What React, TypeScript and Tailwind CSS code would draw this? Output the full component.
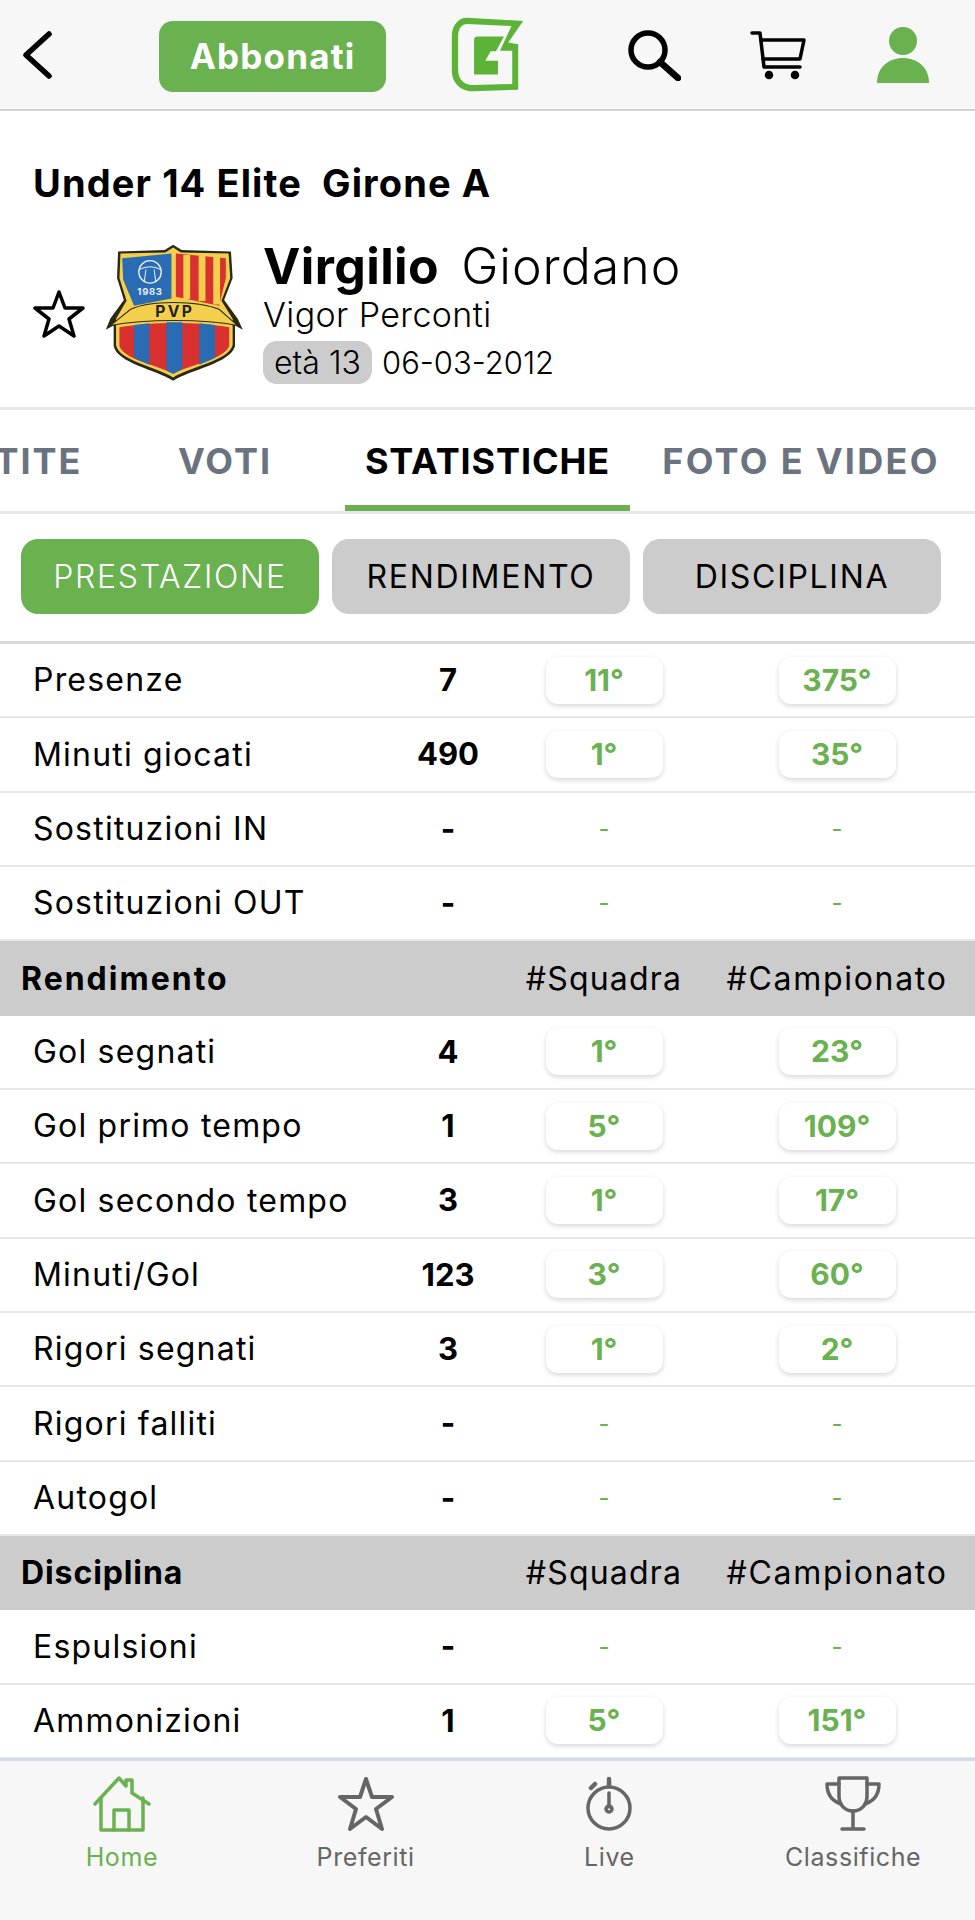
const GREEN = '#6ab150';

const rows1 = [
  { label: 'Presenze', value: '7', a: '11°', b: '375°' },
  { label: 'Minuti giocati', value: '490', a: '1°', b: '35°' },
  { label: 'Sostituzioni IN', value: '-', a: '-', b: '-' },
  { label: 'Sostituzioni OUT', value: '-', a: '-', b: '-' },
];
const rows2 = [
  { label: 'Gol segnati', value: '4', a: '1°', b: '23°' },
  { label: 'Gol primo tempo', value: '1', a: '5°', b: '109°' },
  { label: 'Gol secondo tempo', value: '3', a: '1°', b: '17°' },
  { label: 'Minuti/Gol', value: '123', a: '3°', b: '60°' },
  { label: 'Rigori segnati', value: '3', a: '1°', b: '2°' },
  { label: 'Rigori falliti', value: '-', a: '-', b: '-' },
  { label: 'Autogol', value: '-', a: '-', b: '-' },
];
const rows3 = [
  { label: 'Espulsioni', value: '-', a: '-', b: '-' },
  { label: 'Ammonizioni', value: '1', a: '5°', b: '151°' },
];

const Rank = ({ text }: { text: string }) =>
  text === '-' ? (
    <span className="text-[24px] text-[#6ab150]">-</span>
  ) : (
    <span className="w-[117px] h-[47px] rounded-[12px] bg-white shadow-[0_2px_5px_rgba(0,0,0,0.16)] flex items-center justify-center text-[30px] font-bold text-[#6ab150]">
      {text}
    </span>
  );

const Row = ({ label, value, a, b }: { label: string; value: string; a: string; b: string }) => (
  <div className="grid grid-cols-[398px_100px_212px_254px] items-center h-[74.35px] border-b-2 border-[#e5e7eb]">
    <span className="pl-[33px] text-[32px] tracking-[1.2px] font-normal text-black">{label}</span>
    <span className="text-center text-[31px] font-bold text-black">{value}</span>
    <span className="flex justify-center">
      <Rank text={a} />
    </span>
    <span className="flex justify-center">
      <Rank text={b} />
    </span>
  </div>
);

const SectionHead = ({ title, cls }: { title: string; cls: string }) => (
  <div className="grid grid-cols-[498px_212px_254px] items-center h-[74.35px] bg-[#cccccc] text-[32px] tracking-[1.2px] font-normal text-black">
    <span className={`pl-[21px] font-bold ${cls}`}>{title}</span>
    <span className="text-center">#Squadra</span>
    <span className="text-center tracking-[1.7px]">#Campionato</span>
  </div>
);

const Crest = () => (
  <svg width="138" height="137" viewBox="50 30 405 403" className="ml-[20px] shrink-0">
    <path d="M250 32 L275 48 L420 52 L425 130 L400 195 L440 250 L455 282 L432 270 L432 330 C420 380 300 400 250 432 C200 400 85 380 75 330 L75 270 L52 282 L65 250 L105 195 L85 130 L88 52 L225 48 Z" fill="#2a2a14" />
    <path d="M250 40 L273 55 L413 58 L418 130 L392 197 L425 250 L425 328 C412 374 298 392 250 423 C202 392 92 374 82 328 L82 250 L113 197 L92 130 L95 58 L227 55 Z" fill="#f4cf4e" />
    <path d="M100 72 L245 58 L245 190 L135 212 L103 135 Z" fill="#2a6cb3" />
    <path d="M258 58 L405 72 L405 130 L385 212 L258 185 Z" fill="#d9312f" />
    <path d="M280 62 H300 V192 H280 Z M325 64 H345 V198 H325 Z M368 68 H388 V208 H368 Z" fill="#f4cf4e" />
    <circle cx="182" cy="112" r="33" fill="none" stroke="#e6edf5" strokeWidth="4" />
    <path d="M150 105 C170 95 195 95 214 105 M165 142 L170 105 M199 142 L194 105" stroke="#e6edf5" strokeWidth="3" fill="none" />
    <text x="182" y="180" textAnchor="middle" fontSize="28" fontWeight="700" fill="#e6edf5" letterSpacing="2" fontFamily="Inter, sans-serif">1983</text>
    <path d="M125 222 C180 195 320 195 385 222 L440 270 C340 250 170 250 65 270 Z" fill="#f4cf4e" stroke="#2a2a14" strokeWidth="3" />
    <text x="255" y="244" textAnchor="middle" fontSize="46" fontWeight="700" fill="#222" letterSpacing="7" fontFamily="Inter, sans-serif">PVP</text>
    <path d="M92 275 C190 258 320 258 415 275 L415 330 C400 370 300 385 250 412 C200 385 105 370 92 330 Z" fill="#d9312f" />
    <path d="M135 268 L180 263 V385 L135 365 Z M230 260 H277 V398 L250 412 L230 402 Z M327 263 L373 268 V365 L327 385 Z" fill="#2a6cb3" />
  </svg>
);

const Logo = () => (
  <svg width="75" height="77" viewBox="60 50 225 232">
    <path d="M110 55 L280 65 L235 130 L265 135 V272 L130 277 C90 277 65 250 65 215 V110 C65 78 85 55 110 55 Z" fill="#5cb338" />
    <path d="M112 74 L245 80 L210 155 H247 V255 L130 258 C100 258 84 240 84 212 V112 C84 88 95 74 112 74 Z" fill="#f7f7f7" />
    <path d="M142 112 H222 L198 156 H182 L166 185 H204 V226 H132 V122 C132 116 136 112 142 112 Z" fill="#5cb338" />
  </svg>
);

const NavStar = () => (
  <svg width="58" height="56" viewBox="0 0 58 56" fill="none" stroke="#666" strokeWidth="4" strokeLinejoin="round">
    <path d="M29 3 L35 21 L55 21 L39 33 L45 53 L29 41 L13 53 L19 33 L3 21 L23 21 Z" />
  </svg>
);

const tabs = [
  { label: 'PARTITE', cls: 'w-[210px] -ml-[105px] text-[#6b7280] tracking-[2px]' },
  { label: 'VOTI', cls: 'w-[240px] text-[#6b7280] tracking-[2px]' },
  { label: 'STATISTICHE', cls: 'w-[285px] text-black tracking-[0.9px] border-b-[6px] border-[#6ab150] pt-[6px]' },
  { label: 'FOTO E VIDEO', cls: 'w-[342px] text-[#6b7280] tracking-[2.3px]' },
];

export default function App() {
  return (
    <div className="w-[975px] h-[1920px] flex flex-col bg-white overflow-hidden font-['Inter',sans-serif]">
      <header className="h-[111px] shrink-0 flex items-center bg-[#f7f7f7] border-b-2 border-[#d4d4d4]">
        <svg width="32" height="50" viewBox="0 0 32 50" fill="none" stroke="#000" strokeWidth="5.5" strokeLinecap="round" strokeLinejoin="round" className="ml-[21px]">
          <path d="M28 4 L5 25 L28 46" />
        </svg>
        <button className="ml-[106px] mt-[4px] w-[227px] h-[71px] rounded-[14px] bg-[#6ab150] text-white text-[35px] tracking-[1.2px] font-bold">
          Abbonati
        </button>
        <span className="ml-[64px] flex">
          <Logo />
        </span>
        <svg width="54" height="52" viewBox="0 0 54 52" fill="none" stroke="#000" strokeWidth="5.5" strokeLinecap="round" className="ml-[102px]">
          <circle cx="21" cy="21" r="17" />
          <path d="M33 33 L51 49" strokeWidth="6.5" />
        </svg>
        <svg width="56" height="52" viewBox="0 0 56 52" fill="none" stroke="#000" strokeWidth="3.5" strokeLinecap="round" strokeLinejoin="round" className="ml-[69px]">
          <path d="M2 4 H10 L14 38 H50" />
          <path d="M11 11 H54 L50 30 H13" />
          <circle cx="19" cy="46" r="2.5" fill="#000" />
          <circle cx="45" cy="46" r="2.5" fill="#000" />
        </svg>
        <svg width="56" height="56" viewBox="0 0 56 56" fill="#6ab150" className="ml-[69px]">
          <circle cx="28" cy="14" r="14" />
          <path d="M2 56 C2 40 14 31 28 31 C42 31 54 40 54 56 Z" />
        </svg>
      </header>

      <div className="h-[299px] shrink-0 border-b-[3px] border-[#e5e7eb] pl-[33px]">
        <h1 className="mt-[50px] text-[38px] leading-[44px] tracking-[1.1px] font-bold text-black whitespace-pre">Under 14 Elite  Girone A</h1>
        <div className="mt-[35px] flex items-center">
          <svg width="52" height="50" viewBox="0 0 52 50" fill="none" stroke="#000" strokeWidth="3.5" strokeLinejoin="round" className="shrink-0 mt-[3px]">
            <path d="M26 3 L32 19 L50 19 L36 30 L41 47 L26 37 L11 47 L16 30 L2 19 L20 19 Z" />
          </svg>
          <Crest />
          <div className="ml-[20px] flex flex-col">
            <div className="text-[50px] leading-[52px] tracking-[0.4px] text-black whitespace-pre">
              <span className="font-bold">Virgilio</span>
              <span className="font-light ml-[22px] tracking-[1px]">Giordano</span>
            </div>
            <div className="text-[34px] leading-[46px] tracking-[0.4px] font-light text-black">Vigor Perconti</div>
            <div className="flex items-center mt-[3px] text-[32px] leading-[43px] font-light text-black">
              <span className="w-[109px] h-[43px] rounded-[14px] bg-[#cccccc] flex items-center justify-center">età 13</span>
              <span className="ml-[10px] text-[31px]">06-03-2012</span>
            </div>
          </div>
        </div>
      </div>

      <nav className="h-[104px] shrink-0 flex items-center border-b-[3px] border-[#e5e7eb] text-[36px] font-bold overflow-hidden">
        {tabs.map((t) => (
          <div key={t.label} className={`h-full shrink-0 flex items-center justify-center ${t.cls}`}>
            {t.label}
          </div>
        ))}
      </nav>

      <div className="h-[130px] shrink-0 flex items-start gap-[13px] pl-[21px] pt-[25px] border-b-[3px] border-[#d9d9d9] text-[32px] tracking-[1.7px]">
        <div className="w-[298px] h-[75px] rounded-[17px] bg-[#6ab150] text-white font-light flex items-center justify-center">PRESTAZIONE</div>
        <div className="w-[298px] h-[75px] rounded-[17px] bg-[#cccccc] text-black font-normal flex items-center justify-center">RENDIMENTO</div>
        <div className="w-[298px] h-[75px] rounded-[17px] bg-[#cccccc] text-black font-normal flex items-center justify-center">DISCIPLINA</div>
      </div>

      <main className="flex-1 min-h-0 overflow-hidden">
        {rows1.map((r) => <Row key={r.label} {...r} />)}
        <SectionHead title="Rendimento" cls="tracking-[2px]" />
        {rows2.map((r) => <Row key={r.label} {...r} />)}
        <SectionHead title="Disciplina" cls="tracking-[0.9px]" />
        {rows3.map((r) => <Row key={r.label} {...r} />)}
      </main>

      <footer className="h-[162px] shrink-0 grid grid-cols-4 bg-[#f7f7f7] border-t-[3px] border-[#d3dbe6] pt-[15px] text-[25px] tracking-[0.6px] text-[#666]">
        <div className="flex flex-col items-center text-[#6ab150]">
          <svg width="58" height="56" viewBox="0 0 58 56" fill="none" stroke={GREEN} strokeWidth="3.5" strokeLinejoin="round" strokeLinecap="round">
            <path d="M2 28 L26 2 L33 10 V4 H39 V17 L56 28" />
            <path d="M8 22 V54 H50 V22" />
            <path d="M21 54 V34 H36 V54" />
          </svg>
          <span className="mt-[7px]">Home</span>
        </div>
        <div className="flex flex-col items-center">
          <NavStar />
          <span className="mt-[7px]">Preferiti</span>
        </div>
        <div className="flex flex-col items-center">
          <svg width="58" height="56" viewBox="0 0 58 56" fill="none" stroke="#666" strokeWidth="3.5" strokeLinecap="round">
            <circle cx="29" cy="32" r="21" />
            <path d="M29 3 V10 M15 8 L11 12" strokeWidth="4.5" />
            <path d="M29 17 V31" />
            <circle cx="29" cy="33" r="3" />
          </svg>
          <span className="mt-[7px]">Live</span>
        </div>
        <div className="flex flex-col items-center">
          <svg width="58" height="56" viewBox="0 0 58 56" fill="none" stroke="#666" strokeWidth="3.5" strokeLinecap="round" strokeLinejoin="round">
            <path d="M15 2 H43 V20 C43 29 37 35 29 35 C21 35 15 29 15 20 Z" />
            <path d="M15 8 H3 C3 18 8 25 17 28 M43 8 H55 C55 18 50 25 41 28" />
            <path d="M29 35 V53 M18 53 H40" />
          </svg>
          <span className="mt-[7px]">Classifiche</span>
        </div>
      </footer>
    </div>
  );
}
